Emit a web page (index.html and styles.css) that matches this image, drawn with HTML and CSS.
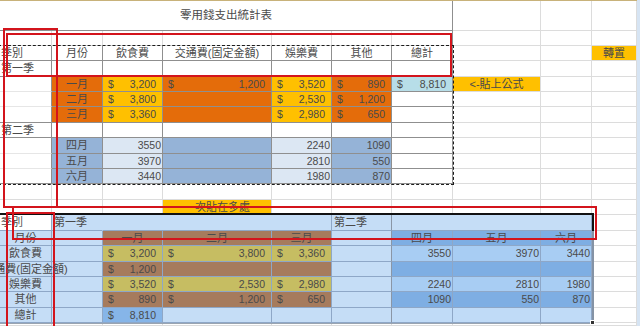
FILE: index.html
```html
<!DOCTYPE html>
<html lang="zh-Hant">
<head>
<meta charset="utf-8">
<title>零用錢支出統計表</title>
<link rel="stylesheet" href="styles.css">
</head>
<body>
<div class="frame">
  <div class="wrap">
    <div class="topbar"></div>
    <div class="sheet">
      <!-- r0 -->
      <div class="t ttl">零用錢支出統計表</div><div></div><div></div><div></div>
      <!-- r1 -->
      <div></div><div></div><div></div><div></div><div></div><div></div><div class="tr"></div><div></div><div></div><div></div>
      <!-- r2 header -->
      <div class="t"><span class="cut">季別</span></div><div class="t c">月份</div><div class="t c">飲食費</div><div class="t c">交通費(固定金額)</div><div class="t c">娛樂費</div><div class="t c">其他</div><div class="t c">總計</div><div></div><div></div><div class="gd c">轉置</div>
      <!-- r3 -->
      <div class="t"><span class="cut">第一季</span></div><div class="t"></div><div class="t"></div><div class="t"></div><div class="t"></div><div class="t"></div><div class="t"></div><div></div><div></div><div></div>
      <!-- r4 -->
      <div class="ta"></div><div class="t or c">一月</div><div class="t gd a"><span>$</span><span>3,200</span></div><div class="t or a"><span>$</span><span>1,200</span></div><div class="t gd a"><span>$</span><span>3,520</span></div><div class="t or a"><span>$</span><span>890</span></div><div class="t tq a"><span>$</span><span>8,810</span></div><div class="gd c">&lt;-貼上公式</div><div></div><div></div>
      <!-- r5 -->
      <div class="ta"></div><div class="t or c">二月</div><div class="t gd a"><span>$</span><span>3,800</span></div><div class="t or"></div><div class="t gd a"><span>$</span><span>2,530</span></div><div class="t or a"><span>$</span><span>1,200</span></div><div class="t"></div><div></div><div></div><div></div>
      <!-- r6 -->
      <div class="t"></div><div class="t or c">三月</div><div class="t gd a"><span>$</span><span>3,360</span></div><div class="t or"></div><div class="t gd a"><span>$</span><span>2,980</span></div><div class="t or a"><span>$</span><span>650</span></div><div class="t"></div><div></div><div></div><div></div>
      <!-- r7 -->
      <div class="t"><span class="cut">第二季</span></div><div class="t"></div><div class="t"></div><div class="t"></div><div class="t"></div><div class="t"></div><div class="t"></div><div></div><div></div><div></div>
      <!-- r8 -->
      <div class="ta"></div><div class="t mb c">四月</div><div class="t lb n">3550</div><div class="t mb"></div><div class="t lb n">2240</div><div class="t mb n">1090</div><div class="t"></div><div></div><div></div><div></div>
      <!-- r9 -->
      <div class="ta"></div><div class="t mb c">五月</div><div class="t lb n">3970</div><div class="t mb"></div><div class="t lb n">2810</div><div class="t mb n">550</div><div class="t"></div><div></div><div></div><div></div>
      <!-- r10 -->
      <div class="t"></div><div class="t mb c">六月</div><div class="t lb n">3440</div><div class="t mb"></div><div class="t lb n">1980</div><div class="t mb n">870</div><div class="t"></div><div></div><div></div><div></div>
      <!-- r11 -->
      <div></div><div></div><div></div><div></div><div></div><div></div><div></div><div></div><div></div><div></div>
      <!-- r12 -->
      <div></div><div></div><div></div><div class="gd c ul">一次貼在多處</div><div></div><div></div><div></div><div></div><div></div><div></div>
      <!-- r13 -->
      <div class="b wh"><span class="cut">季別</span></div><div class="b sl nr">第一季</div><div class="b sl s3"></div><div class="b sl f">第二季</div><div class="b sl s3"></div><div></div>
      <!-- r14 -->
      <div class="b sl c">月份</div><div class="b sl"></div><div class="b br c">一月</div><div class="b br c">二月</div><div class="b br c">三月</div><div class="b sl f"></div><div class="b b2 c">四月</div><div class="b b2 c">五月</div><div class="b b2 c">六月</div><div></div>
      <!-- r15 -->
      <div class="b sl c">飲食費</div><div class="b sl"></div><div class="b kh a"><span>$</span><span>3,200</span></div><div class="b kh a"><span>$</span><span>3,800</span></div><div class="b kh a"><span>$</span><span>3,360</span></div><div class="b sl f"></div><div class="b b3 n">3550</div><div class="b b3 n">3970</div><div class="b b3 n">3440</div><div></div>
      <!-- r16 -->
      <div class="b sl c"><span class="ov">交通費(固定金額)</span></div><div class="b sl"></div><div class="b br a"><span>$</span><span>1,200</span></div><div class="b br"></div><div class="b br"></div><div class="b sl f"></div><div class="b b2"></div><div class="b b2"></div><div class="b b2"></div><div></div>
      <!-- r17 -->
      <div class="b sl c">娛樂費</div><div class="b sl"></div><div class="b kh a"><span>$</span><span>3,520</span></div><div class="b kh a"><span>$</span><span>2,530</span></div><div class="b kh a"><span>$</span><span>2,980</span></div><div class="b sl f"></div><div class="b b3 n">2240</div><div class="b b3 n">2810</div><div class="b b3 n">1980</div><div></div>
      <!-- r18 -->
      <div class="b sl c">其他</div><div class="b sl"></div><div class="b br a"><span>$</span><span>890</span></div><div class="b br a"><span>$</span><span>1,200</span></div><div class="b br a"><span>$</span><span>650</span></div><div class="b sl f"></div><div class="b b2 n">1090</div><div class="b b2 n">550</div><div class="b b2 n">870</div><div></div>
      <!-- r19 -->
      <div class="b sl c">總計</div><div class="b sl"></div><div class="b bc a"><span>$</span><span>8,810</span></div><div class="b sl"></div><div class="b sl"></div><div class="b sl f"></div><div class="b b4"></div><div class="b b4"></div><div class="b b4"></div><div></div>
      <!-- r20 -->
      <div></div><div></div><div></div><div></div><div></div><div></div><div></div><div></div><div></div><div></div>
    </div>

    <div class="marquee"></div>
    <div class="sel"></div>
    <div class="sel-r"></div>
    <div class="handle"></div>

    <div class="red red-a"></div>
    <div class="red red-b"></div>
    <div class="red red-c"></div>
    <div class="red red-d"></div>
  </div>
  <div class="edge"></div>
</div>
</body>
</html>
```

FILE: styles.css
```css
* { box-sizing: border-box; }
html, body { margin: 0; padding: 0; background: #fff; }
body {
  width: 640px;
  height: 326px;
  overflow: hidden;
  font-family: "Liberation Sans", "Noto Sans CJK TC", sans-serif;
  font-size: 11px;
  color: #4a4a4a;
}
.frame { display: flex; height: 326px; }
.wrap { position: relative; width: 637px; height: 326px; }
.edge { width: 3px; background: #d6e4f3; }
.topbar { height: 1px; background: #c8b27a; }

.sheet {
  display: grid;
  grid-template-columns: 52px 51px 60px 109px 60px 60px 61px 88px 51px 45px;
  grid-template-rows: 30px 15px 15px 16px 15px 15px 16px 15px 16px 15px 15px 16px 15px 16px 15px 16px 15px 15px 16px 15px 3px;
}
.sheet > div {
  border-right: 1px solid #dcdcdc;
  border-bottom: 1px solid #dcdcdc;
  display: flex;
  align-items: center;
  white-space: nowrap;
  padding: 0 2px;
  line-height: 1;
  min-width: 0;
}

/* top table */
.sheet > .t { border-color: #8f8f8f; }
.sheet > .ta { border-right-color: #8f8f8f; border-bottom-color: #e6e6e6; }
.sheet > .tr { border-right-color: #8f8f8f; }
.ttl { grid-column: span 7; justify-content: center; font-size: 11.5px; padding-top: 1px; }

/* bottom table */
.sheet > .b { border-color: #8ea7c7; }
.sheet > .f { border-right-color: #8a96a6; }
.sheet > .nr { border-right-color: transparent; }
.s3 { grid-column: span 3; }

/* alignment */
.c { justify-content: center; }
.n { justify-content: flex-end; padding-right: 1px !important; }
.a { justify-content: space-between; padding: 0 6px 0 5px !important; }
.a span, .n { font-size: 10.5px; }
.cut { margin-left: -1px; }
.ov { position: relative; z-index: 2; }

/* fills */
.or { background: #e46c0a; }
.gd { background: #ffc000; }
.tq { background: #b7dee8; }
.mb { background: #95b3d7; }
.lb { background: #dce7f3; }
.wh { background: #fff; }
.sl { background: #c5ddf6; }
.br { background: #a67b5d; }
.kh { background: #c6bd62; }
.b2 { background: #7eaee3; }
.b3 { background: #a8cdf3; }
.b4 { background: #c0dbf7; }
.bc { background: #86b5e8; }
.sheet > .ul { border-bottom-color: #2b4a9a; }

/* overlays */
.marquee {
  position: absolute;
  left: -2px;
  top: 45px;
  width: 456px;
  height: 140px;
  border: 1px dashed #1c1c1c;
  pointer-events: none;
}
.sel {
  position: absolute;
  left: -4px;
  top: 213px;
  width: 598px;
  height: 111px;
  border-top: 2px solid #111;
  border-right: 2px solid #8593a5;
  border-bottom: 1px solid #9aa4b0;
}
.sel-r {
  position: absolute;
  left: 592px;
  top: 213px;
  width: 2px;
  height: 18px;
  background: #111;
}
.handle {
  position: absolute;
  left: 590px;
  top: 320px;
  width: 5px;
  height: 5px;
  background: #333;
  border: 1px solid #fff;
}
.red {
  position: absolute;
  border: 2px solid #d3141c;
}
.red-a { left: 3px; top: 28px; width: 55px; height: 180px; }
.red-b { left: 6px; top: 33px; width: 446px; height: 44px; }
.red-c { left: 12px; top: 206px; width: 585px; height: 34px; }
.red-d { left: 6px; top: 212px; width: 49px; height: 130px; }
```
